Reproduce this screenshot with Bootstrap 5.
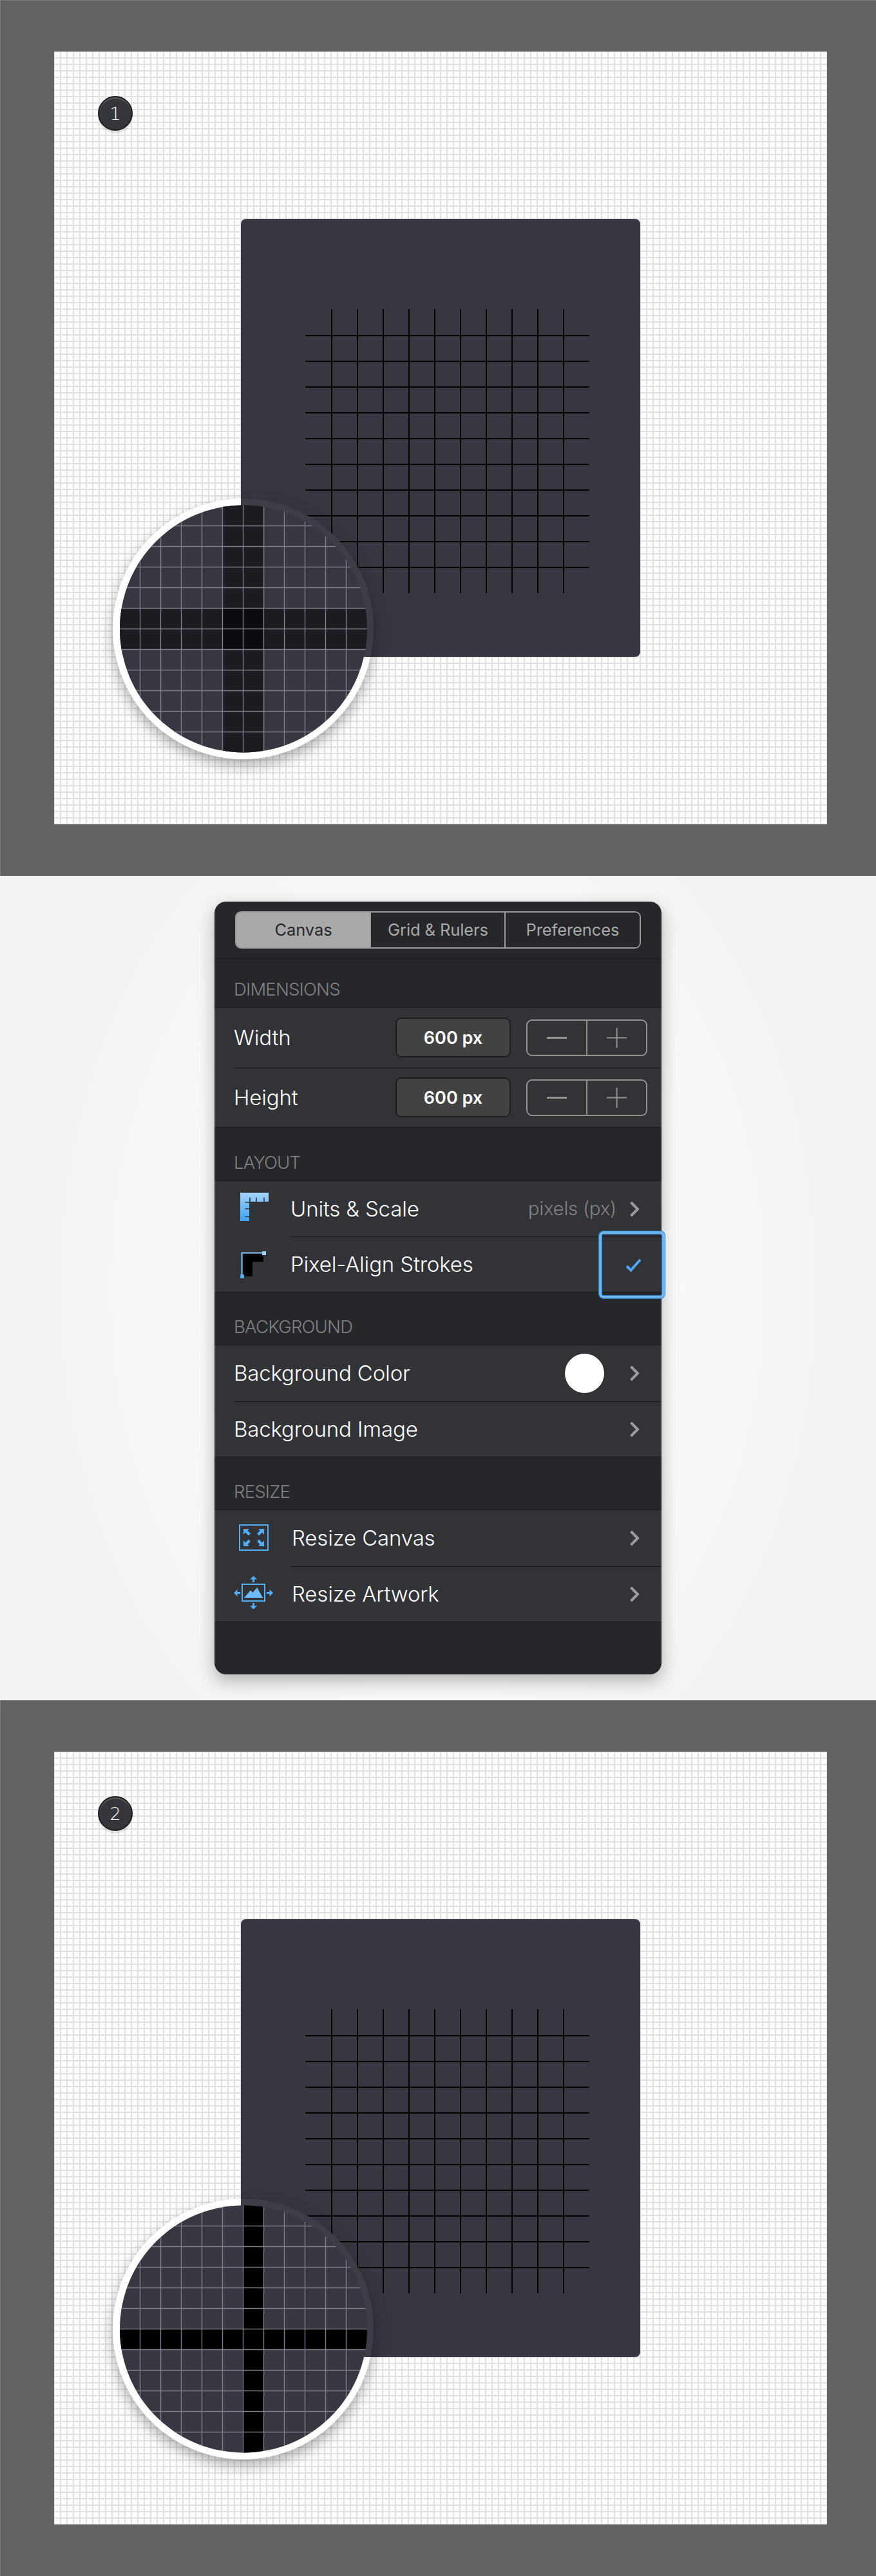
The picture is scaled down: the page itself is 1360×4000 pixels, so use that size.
<!doctype html>
<html lang="en">
<head>
<meta charset="utf-8">
<title>Pixel-Align Strokes</title>
<link href="https://cdn.jsdelivr.net/npm/bootstrap@5.3.0/dist/css/bootstrap.min.css" rel="stylesheet">
<style>
body{margin:0;background:#f4f4f4;font-family:"Inter","Liberation Sans",sans-serif;-webkit-font-smoothing:antialiased}
.art-frame{height:1360px;background:#616264;padding:80px 76px 80px 84px;box-shadow:inset 0 1px 0 #7c7d7f,inset 1px 0 0 #7c7d7f}
.art-canvas{position:relative;width:1200px;height:1200px;padding:260px 0 0 290px;background-color:#fff;
 background-image:linear-gradient(to right,#e1e1e3 2px,transparent 2px),linear-gradient(to bottom,#e1e1e3 2px,transparent 2px);
 background-size:10px 10px;background-position:9px 9px}
.art-board{width:620px;height:680px;background:#383741;border-radius:8px}
.art-board svg,.loupe svg{display:block}
.step-dot{position:absolute;left:68px;top:69px;width:54px;height:54px;border-radius:50%;background:#35363b;border:2px solid #1d1d20;
 box-shadow:inset 0 2px 0 #5a5b60,0 4px 0 rgba(0,0,0,.1);color:#fff;font:300 27px/1 "DejaVu Sans",sans-serif}
.loupe{position:absolute;left:91px;top:694px;width:405px;height:405px}
.loupe-disc{filter:drop-shadow(0 9px 11px rgba(0,0,0,.32))}
.stage{height:1280px;padding-top:40px;background:radial-gradient(ellipse 640px 900px at 50% 50%,#f9f9f9 55%,#f2f2f2 100%)}
.tool-panel{width:694px;height:1200px;margin:0 auto;background:#26272a;border:0;border-radius:18px;box-shadow:0 10px 26px rgba(0,0,0,.28);color:#fff}
.seg-wrap{height:89px;padding:15px 32px 0;border-bottom:1px solid #1b1b1e}
.seg-group{width:630px;height:58px;border:2px solid #9a9a9b;border-radius:9px;overflow:hidden}
.seg-group .seg-btn{flex:1 0 0;border:0;border-left:2px solid #9a9a9b;border-radius:0;margin:0;background:#26272a;color:#a9a9aa;font-size:25.5px;font-weight:400;line-height:1;padding:0;letter-spacing:-.1px}
.seg-group .seg-btn:first-child{border-left:0}
.seg-group .seg-btn.seg-on{background:#a9a9aa;color:#26272a}
.sec-title{display:flex;align-items:flex-end;padding:0 0 14px 30px;margin:0;color:#808183;font-size:27.5px;font-weight:300;line-height:1;letter-spacing:-.8px}
.sh-a{height:75px}.sh-b{height:82px}.sh-c{height:81px}
.tool-panel>.list-group.set-group{border-radius:0;border-top:1px solid #18181a;border-bottom:1px solid #18181a;background:#323337}
.set-item{position:relative;display:flex;align-items:stretch;padding:0;border:0;border-radius:0;background:transparent;color:#fff}
.h-dim{height:92.5px}.h-lay{height:86px}.h-std{height:86.5px}
.set-lead{flex:0 0 118px;padding-left:31px;display:flex;align-items:center}
.set-lead svg{display:block}
.lead-ruler{padding-left:40px}
.lead-ruler svg{margin-bottom:6px}
.lead-align{padding-left:40px}
.lead-art{padding-left:30px}
.set-main{flex:1 1 auto;min-width:0;display:flex;align-items:center;padding-right:34px;font-size:33px;font-weight:350;letter-spacing:-.15px;line-height:1}
.set-item.no-icon .set-main{margin-left:30px}
.set-item+.set-item .set-main{border-top:1px solid #18181a}
.text-nudge{padding-left:2px}
.val-box{width:179px;height:62px;margin-left:auto;border:2px solid #1e1e21;border-radius:9px;background:#424243;color:#fff;font-size:27px;font-weight:600;letter-spacing:0}
.step-group{width:188px;height:57px;margin:0 -12px 0 24px;border:2px solid #929293;border-radius:9px;overflow:hidden}
.step-group .step-btn{flex:1 0 0;border:0;border-left:2px solid #929293;border-radius:0;margin:0;padding:0;background:transparent;display:flex;align-items:center;justify-content:center}
.step-group .step-btn:first-child{border-left:0}
.side-val{margin-left:auto;margin-right:20px;color:#808183;font-size:29.5px;font-weight:300;letter-spacing:-.3px}
.chev{margin-left:auto;display:block;flex:none}
.side-val+.chev,.swatch+.chev{margin-left:0}
.swatch{width:61px;height:61px;border-radius:50%;background:#fff;margin-left:auto;margin-right:39px}
.check-focus{position:absolute;right:-5px;top:-8px;width:102px;height:104px;border:4px solid #6cb6f0;border-radius:7px;box-shadow:0 0 0 1px #2b79be,inset 0 0 0 1px #2b79be}
</style>
</head>
<body>

<section class="art-frame">
 <div class="art-canvas">
  <div class="step-dot d-flex align-items-center justify-content-center">1</div>
  <div class="art-board">
   <svg width="620" height="680" viewBox="0 0 620 680"><path fill="none" stroke="#000" stroke-width="2" d="M100 181H541M100 221H541M100 261H541M100 301H541M100 341H541M100 381H541M100 421H541M100 461H541M100 501H541M100 541H541M141 140V581M181 140V581M221 140V581M261 140V581M301 140V581M341 140V581M381 140V581M421 140V581M461 140V581M501 140V581"/></svg>
  </div>
  <div class="loupe">
   <svg width="405" height="405" viewBox="0 0 405 405" overflow="visible">
    <defs>
     <clipPath id="outA"><path clip-rule="evenodd" d="M-60-60H520V520H-60ZM199-60H520V246H199Z"/></clipPath>
     <clipPath id="inA"><rect x="199" y="-60" width="321" height="306"/></clipPath>
     <clipPath id="lensA"><circle cx="203" cy="202.5" r="192"/></clipPath>
    </defs>
    <g class="loupe-disc">
     <circle cx="202.5" cy="202.5" r="202.5" fill="#fff" clip-path="url(#outA)"/>
     <circle cx="202.5" cy="202.5" r="202.5" fill="#403f49" fill-opacity=".92" clip-path="url(#inA)"/>
    </g>
    <g clip-path="url(#lensA)">
     <rect width="405" height="405" fill="#383741"/>
     <rect x="170.5" width="64" height="405" fill="#1c1b21"/>
     <rect y="170.5" width="405" height="64" fill="#1c1b21"/>
     <rect x="170.5" y="170.5" width="64" height="64" fill="#0c0c10"/>
     <path fill="none" stroke="#7f7d88" stroke-width="1.4" d="M42.5 0V405M74.5 0V405M106.5 0V405M138.5 0V405M170.5 0V405M202.5 0V405M234.5 0V405M266.5 0V405M298.5 0V405M330.5 0V405M362.5 0V405M0 42.5H405M0 74.5H405M0 106.5H405M0 138.5H405M0 170.5H405M0 202.5H405M0 234.5H405M0 266.5H405M0 298.5H405M0 330.5H405M0 362.5H405"/>
    </g>
   </svg>
  </div>
 </div>
</section>

<section class="stage">
 <div class="card tool-panel">
  <div class="seg-wrap">
   <div class="btn-group seg-group d-flex" role="group">
    <button type="button" class="btn seg-btn seg-on">Canvas</button>
    <button type="button" class="btn seg-btn">Grid &amp; Rulers</button>
    <button type="button" class="btn seg-btn">Preferences</button>
   </div>
  </div>

  <h6 class="sec-title sh-a">DIMENSIONS</h6>
  <ul class="list-group set-group">
   <li class="list-group-item set-item no-icon h-dim">
    <div class="set-main"><span>Width</span><div class="val-box d-flex align-items-center justify-content-center">600 px</div>
     <div class="btn-group step-group d-flex"><button type="button" class="btn step-btn"><svg width="31" height="3"><rect width="31" height="3" fill="#929293"/></svg></button><button type="button" class="btn step-btn"><svg width="31" height="31"><path d="M15.5 0V31M0 15.5H31" stroke="#929293" stroke-width="2"/></svg></button></div>
    </div>
   </li>
   <li class="list-group-item set-item no-icon h-dim">
    <div class="set-main"><span>Height</span><div class="val-box d-flex align-items-center justify-content-center">600 px</div>
     <div class="btn-group step-group d-flex"><button type="button" class="btn step-btn"><svg width="31" height="3"><rect width="31" height="3" fill="#929293"/></svg></button><button type="button" class="btn step-btn"><svg width="31" height="31"><path d="M15.5 0V31M0 15.5H31" stroke="#929293" stroke-width="2"/></svg></button></div>
    </div>
   </li>
  </ul>

  <h6 class="sec-title sh-b">LAYOUT</h6>
  <ul class="list-group set-group">
   <li class="list-group-item set-item h-lay">
    <div class="set-lead lead-ruler">
     <svg width="44" height="44" viewBox="0 0 44 44"><defs><linearGradient id="rulerG" x1="0" y1="0" x2="0" y2="1"><stop offset="0" stop-color="#a4d4fb"/><stop offset="1" stop-color="#3ea2f5"/></linearGradient></defs><path fill="url(#rulerG)" d="M0 0H44V14H14V44H0Z"/><path stroke="#323337" stroke-width="1.6" d="M15 7.5V14M25 7.5V14M37 7.5V14M7.5 15H14M7.5 25H14M7.5 37H14"/></svg>
    </div>
    <div class="set-main"><span>Units &amp; Scale</span><span class="side-val">pixels (px)</span>
     <svg class="chev" width="16" height="25" viewBox="0 0 16 25"><path d="M2.5 2 13 12.5 2.5 23" fill="none" stroke="#9b9b9d" stroke-width="4"/></svg>
    </div>
   </li>
   <li class="list-group-item set-item h-lay">
    <div class="set-lead lead-align">
     <svg width="40" height="44" viewBox="2 0 40 44"><path fill="#000" d="M6.5 6H38V18.500H21V41H6.500Z"/><path fill="none" stroke="#7fc1f7" stroke-width="2" d="M4.500 40V4.500H38"/><rect x="36" y="2" width="6" height="6" fill="#9bd1fb"/><rect x="2" y="38" width="6" height="6" fill="#4fa9f3"/></svg>
    </div>
    <div class="set-main"><span>Pixel-Align Strokes</span></div>
    <div class="check-focus d-flex align-items-center justify-content-center">
     <svg class="ms-1" width="25" height="21" viewBox="0 0 25 21"><path d="M2 12 8.500 18.500 23 2" fill="none" stroke="#4ea8f0" stroke-width="4"/></svg>
    </div>
   </li>
  </ul>

  <h6 class="sec-title sh-c">BACKGROUND</h6>
  <ul class="list-group set-group">
   <li class="list-group-item set-item no-icon h-std">
    <div class="set-main"><span>Background Color</span><span class="swatch"></span>
     <svg class="chev" width="16" height="25" viewBox="0 0 16 25"><path d="M2.500 2 13 12.500 2.500 23" fill="none" stroke="#9b9b9d" stroke-width="4"/></svg>
    </div>
   </li>
   <li class="list-group-item set-item no-icon h-std">
    <div class="set-main"><span>Background Image</span>
     <svg class="chev" width="16" height="25" viewBox="0 0 16 25"><path d="M2.500 2 13 12.500 2.500 23" fill="none" stroke="#9b9b9d" stroke-width="4"/></svg>
    </div>
   </li>
  </ul>

  <h6 class="sec-title sh-c">RESIZE</h6>
  <ul class="list-group set-group">
   <li class="list-group-item set-item h-std">
    <div class="set-lead">
     <svg width="62" height="56" viewBox="0 0 62 56"><g transform="translate(7 7)"><rect x="1" y="1" width="44" height="39" fill="none" stroke="#55aef5" stroke-width="2"/><g fill="#55aef5"><path d="M7 7H16L13.500 9.800 18 14.500 14.800 17.500 10.200 12.800 7 16Z"/><path d="M39 7H30L32.500 9.800 28 14.500 31.200 17.500 35.800 12.800 39 16Z"/><path d="M7 34H16L13.500 31.200 18 26.500 14.800 23.500 10.200 28.200 7 25Z"/><path d="M39 34H30L32.500 31.200 28 26.500 31.200 23.500 35.800 28.200 39 25Z"/></g></g></svg>
    </div>
    <div class="set-main"><span class="text-nudge">Resize Canvas</span>
     <svg class="chev" width="16" height="25" viewBox="0 0 16 25"><path d="M2.500 2 13 12.500 2.500 23" fill="none" stroke="#9b9b9d" stroke-width="4"/></svg>
    </div>
   </li>
   <li class="list-group-item set-item h-std">
    <div class="set-lead lead-art">
     <svg width="62" height="56" viewBox="0 0 62 56"><g fill="none" stroke="#55aef5" stroke-width="2"><rect x="13" y="13" width="35" height="26"/></g><g fill="#6dbcf8"><path d="M16 34 26 22.500 29.500 26 36 18 45 34Z"/></g><g fill="#55aef5"><path d="M30.500 0 36 5.500H32V10H29V5.500H25Z"/><path d="M30.500 52 36 46.500H32V42H29V46.500H25Z"/><path d="M0 26.500 5.500 21V25H10V28H5.500V32Z"/><path d="M61 26.500 55.500 21V25H51V28H55.500V32Z"/></g></svg>
    </div>
    <div class="set-main"><span class="text-nudge">Resize Artwork</span>
     <svg class="chev" width="16" height="25" viewBox="0 0 16 25"><path d="M2.500 2 13 12.500 2.500 23" fill="none" stroke="#9b9b9d" stroke-width="4"/></svg>
    </div>
   </li>
  </ul>
 </div>
</section>

<section class="art-frame">
 <div class="art-canvas">
  <div class="step-dot d-flex align-items-center justify-content-center">2</div>
  <div class="art-board">
   <svg width="620" height="680" viewBox="0 0 620 680"><path fill="none" stroke="#000" stroke-width="2" d="M100 181H541M100 221H541M100 261H541M100 301H541M100 341H541M100 381H541M100 421H541M100 461H541M100 501H541M100 541H541M141 140V581M181 140V581M221 140V581M261 140V581M301 140V581M341 140V581M381 140V581M421 140V581M461 140V581M501 140V581"/></svg>
  </div>
  <div class="loupe">
   <svg width="405" height="405" viewBox="0 0 405 405" overflow="visible">
    <defs>
     <clipPath id="outB"><path clip-rule="evenodd" d="M-60-60H520V520H-60ZM199-60H520V246H199Z"/></clipPath>
     <clipPath id="inB"><rect x="199" y="-60" width="321" height="306"/></clipPath>
     <clipPath id="lensB"><circle cx="203" cy="202.5" r="192"/></clipPath>
    </defs>
    <g class="loupe-disc">
     <circle cx="202.5" cy="202.5" r="202.5" fill="#fff" clip-path="url(#outB)"/>
     <circle cx="202.5" cy="202.5" r="202.5" fill="#403f49" fill-opacity=".92" clip-path="url(#inB)"/>
    </g>
    <g clip-path="url(#lensB)">
     <rect width="405" height="405" fill="#383741"/>
     <rect x="202.5" width="32" height="405" fill="#000"/>
     <rect y="202.5" width="405" height="32" fill="#000"/>
     <path fill="none" stroke="#7f7d88" stroke-width="1.4" d="M42.5 0V405M74.5 0V405M106.5 0V405M138.5 0V405M170.5 0V405M202.5 0V405M234.5 0V405M266.5 0V405M298.5 0V405M330.5 0V405M362.5 0V405M0 42.5H405M0 74.5H405M0 106.5H405M0 138.5H405M0 170.5H405M0 202.5H405M0 234.5H405M0 266.5H405M0 298.5H405M0 330.5H405M0 362.5H405"/>
    </g>
   </svg>
  </div>
 </div>
</section>

<script src="https://cdn.jsdelivr.net/npm/bootstrap@5.3.0/dist/js/bootstrap.bundle.min.js"></script>
</body>
</html>
